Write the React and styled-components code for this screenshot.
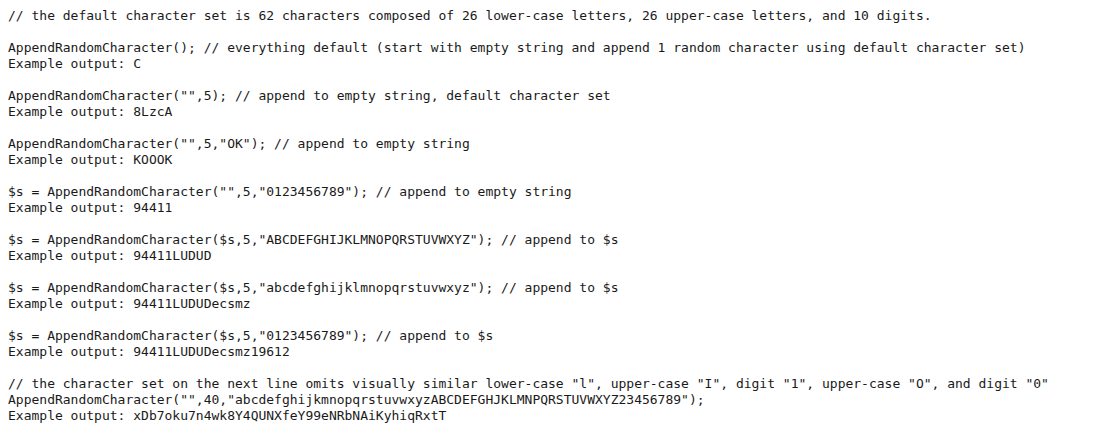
import React from "react";
import styled, { createGlobalStyle } from "styled-components";

const Global = createGlobalStyle`
  html, body { margin: 0; padding: 0; background: #fff; }
  body { margin: 8px; }
`;

const Listing = styled.div`
  display: flex;
  flex-direction: column;
  gap: 16px;
  font-family: "DejaVu Sans Mono", monospace;
  font-size: 13px;
  line-height: 16px;
  color: #1a1a1a;
  padding-top: 0;
`;

const Block = styled.div`
  display: flex;
  flex-direction: column;
`;

const Line = styled.div`
  white-space: pre;
`;

const blocks = [
  ["// the default character set is 62 characters composed of 26 lower-case letters, 26 upper-case letters, and 10 digits."],
  [
    "AppendRandomCharacter(); // everything default (start with empty string and append 1 random character using default character set)",
    "Example output: C",
  ],
  [
    'AppendRandomCharacter("",5); // append to empty string, default character set',
    "Example output: 8LzcA",
  ],
  [
    'AppendRandomCharacter("",5,"OK"); // append to empty string',
    "Example output: KOOOK",
  ],
  [
    '$s = AppendRandomCharacter("",5,"0123456789"); // append to empty string',
    "Example output: 94411",
  ],
  [
    '$s = AppendRandomCharacter($s,5,"ABCDEFGHIJKLMNOPQRSTUVWXYZ"); // append to $s',
    "Example output: 94411LUDUD",
  ],
  [
    '$s = AppendRandomCharacter($s,5,"abcdefghijklmnopqrstuvwxyz"); // append to $s',
    "Example output: 94411LUDUDecsmz",
  ],
  [
    '$s = AppendRandomCharacter($s,5,"0123456789"); // append to $s',
    "Example output: 94411LUDUDecsmz19612",
  ],
  [
    '// the character set on the next line omits visually similar lower-case "l", upper-case "I", digit "1", upper-case "O", and digit "0"',
    'AppendRandomCharacter("",40,"abcdefghijkmnopqrstuvwxyzABCDEFGHJKLMNPQRSTUVWXYZ23456789");',
    "Example output: xDb7oku7n4wk8Y4QUNXfeY99eNRbNAiKyhiqRxtT",
  ],
];

export default function App() {
  return (
    <>
      <Global />
      <Listing>
        {blocks.map((lines, i) => (
          <Block key={i}>
            {lines.map((l, j) => (
              <Line key={j}>{l}</Line>
            ))}
          </Block>
        ))}
      </Listing>
    </>
  );
}
